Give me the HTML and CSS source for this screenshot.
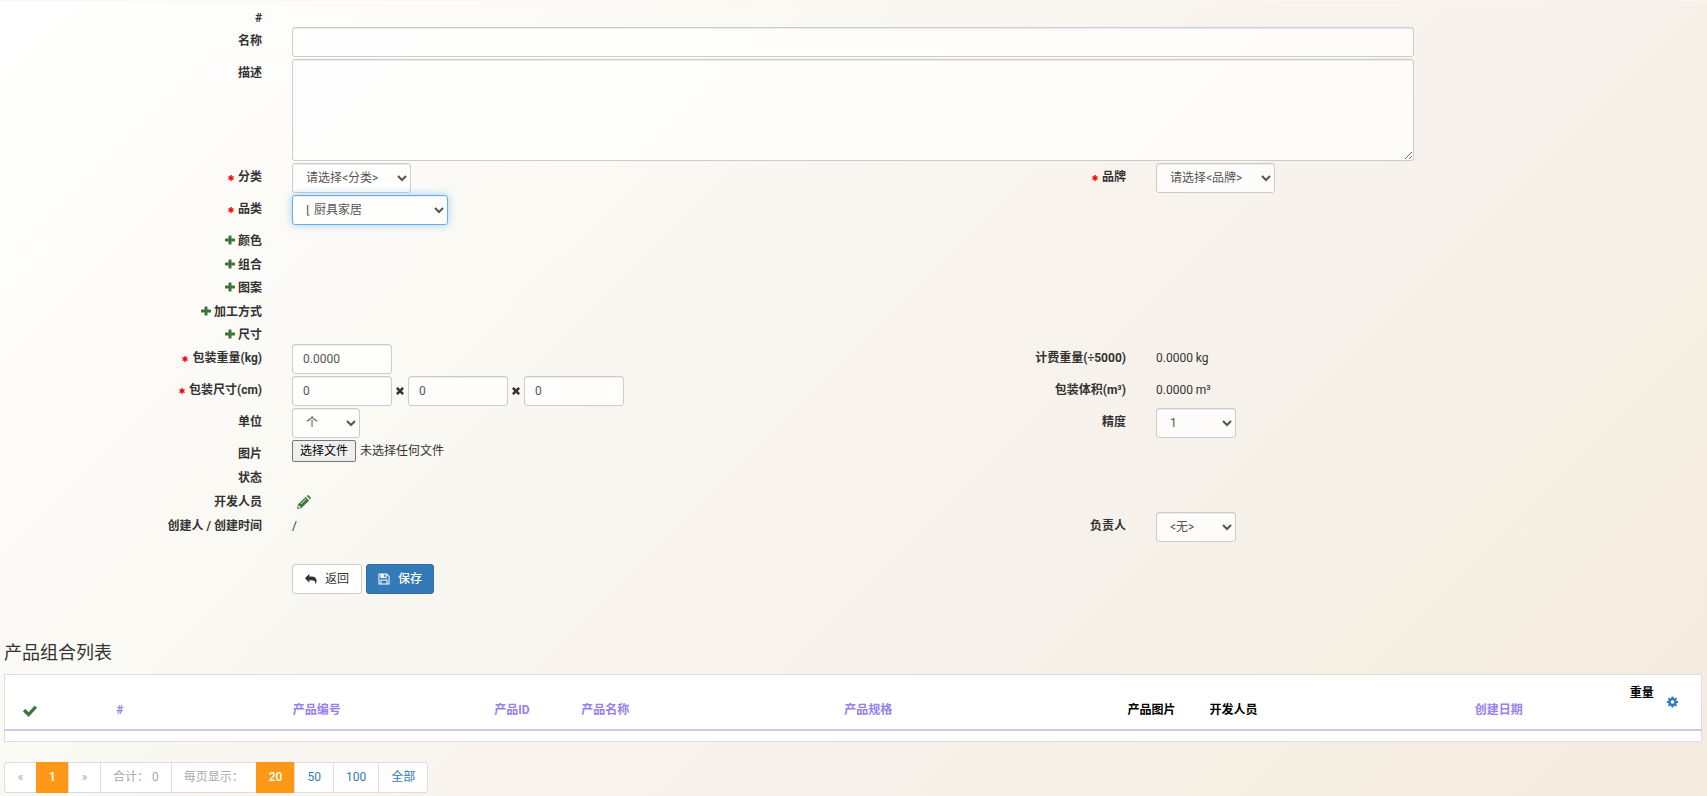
FILE: index.html
```html
<!DOCTYPE html>
<html lang="zh-CN">
<head>
    <meta charset="UTF-8">
    <meta name="viewport" content="width=device-width, initial-scale=1.0">
    <title>产品</title>
    <link rel="stylesheet" href="styles.css">
</head>
<body>

    <!-- icons used more than once -->
    <svg class="sprite" aria-hidden="true">
        <symbol id="star" viewBox="0 0 12 12">
            <path d="M4.6 0h2.8v3.6l3.1-1.8 1.4 2.4L8.8 6l3.1 1.8-1.4 2.4-3.1-1.8V12H4.6V8.4l-3.1 1.8L.1 7.8 3.2 6 .1 4.2l1.4-2.4 3.1 1.8z"/>
        </symbol>
        <symbol id="plus" viewBox="0 0 10 10">
            <path d="M4 .5h2q.5 0 .5.5v2.5H9.500q.5 0 .5.5v2q0 .5-.5.5H6.500V9q0 .5-.5.5H4q-.5 0-.5-.5V6.500H.5q-.5 0-.5-.5V4q0-.5.5-.5h3V1q0-.5.5-.5z"/>
        </symbol>
        <symbol id="times" viewBox="0 0 10 10">
            <path d="M2.600.3 5 2.700 7.400.3q.4-.3.800 0l1.500 1.500q.3.400 0 .8L7.300 5l2.400 2.400q.3.400 0 .8L8.200 9.700q-.4.300-.8 0L5 7.300 2.600 9.700q-.4.300-.8 0L.3 8.200q-.3-.4 0-.8L2.700 5 .3 2.600q-.3-.4 0-.8L1.800.3q.4-.3.800 0z"/>
        </symbol>
    </svg>

    <div class="container">
        <form class="product-form">
            <div class="row">
                <span class="label">#</span>
            </div>
            <div class="row">
                <label class="label" for="name">名称</label>
                <div class="field wide"><input type="text" id="name" class="control"></div>
            </div>
            <div class="row">
                <label class="label" for="desc">描述</label>
                <div class="field wide"><textarea id="desc" class="control"></textarea></div>
            </div>
            <div class="row">
                <label class="label" for="category"><svg class="star"><use href="#star"/></svg>分类</label>
                <div class="field">
                    <select id="category" class="control select-md"><option>请选择&lt;分类&gt;</option></select>
                </div>
                <label class="label" for="brand"><svg class="star"><use href="#star"/></svg>品牌</label>
                <div class="field">
                    <select id="brand" class="control select-md"><option>请选择&lt;品牌&gt;</option></select>
                </div>
            </div>
            <div class="row">
                <label class="label" for="kind"><svg class="star"><use href="#star"/></svg>品类</label>
                <div class="field">
                    <select id="kind" class="control select-lg active"><option>⌊ 厨具家居</option></select>
                </div>
            </div>

            <div class="attributes">
                <div class="row"><span class="label"><svg class="plus"><use href="#plus"/></svg>颜色</span></div>
                <div class="row"><span class="label"><svg class="plus"><use href="#plus"/></svg>组合</span></div>
                <div class="row"><span class="label"><svg class="plus"><use href="#plus"/></svg>图案</span></div>
                <div class="row"><span class="label"><svg class="plus"><use href="#plus"/></svg>加工方式</span></div>
                <div class="row"><span class="label"><svg class="plus"><use href="#plus"/></svg>尺寸</span></div>
            </div>

            <div class="row">
                <label class="label" for="weight"><svg class="star"><use href="#star"/></svg>包装重量(kg)</label>
                <div class="field"><input type="text" id="weight" class="control number" value="0.0000"></div>
                <span class="label">计费重量(÷5000)</span>
                <div class="field text">0.0000 kg</div>
            </div>
            <div class="row">
                <label class="label" for="length"><svg class="star"><use href="#star"/></svg>包装尺寸(cm)</label>
                <div class="field size">
                    <input type="text" id="length" class="control number" value="0">
                    <svg class="times"><use href="#times"/></svg>
                    <input type="text" aria-label="宽" class="control number" value="0">
                    <svg class="times"><use href="#times"/></svg>
                    <input type="text" aria-label="高" class="control number" value="0">
                </div>
                <span class="label">包装体积(m³)</span>
                <div class="field text">0.0000 m³</div>
            </div>
            <div class="row">
                <label class="label" for="unit">单位</label>
                <div class="field">
                    <select id="unit" class="control select-xs"><option>个</option></select>
                </div>
                <label class="label" for="precision">精度</label>
                <div class="field">
                    <select id="precision" class="control select-sm"><option>1</option></select>
                </div>
            </div>
            <div class="row">
                <label class="label" for="picture">图片</label>
                <div class="field file">
                    <input type="file" id="picture">
                    <label class="file-btn" for="picture">选择文件</label>
                    <span>未选择任何文件</span>
                </div>
            </div>
            <div class="row">
                <span class="label">状态</span>
            </div>
            <div class="row developer">
                <span class="label">开发人员</span>
                <div class="field text">
                    <a href="#" aria-label="编辑"><svg class="pencil" viewBox="0 0 14 14"><path fill-rule="evenodd" d="M8.600 1.900.9 9.600 0 14l4.400-.9 7.700-7.700zM1.900 10.400l1.700 1.700-.6.600-1.100.2-.8-.8.200-1.100zM8.600 3.800l.5.500-5 5-.5-.5zM9.600.9l.6-.5q.7-.6 1.400 0l2 2q.6.700 0 1.400l-.5.600z"/></svg></a>
                </div>
            </div>
            <div class="row">
                <span class="label">创建人 / 创建时间</span>
                <div class="field text">/</div>
                <label class="label" for="owner">负责人</label>
                <div class="field">
                    <select id="owner" class="control select-sm"><option>&lt;无&gt;</option></select>
                </div>
            </div>

            <div class="row actions">
                <div class="field buttons">
                    <button type="button" class="btn">
                        <svg viewBox="0 0 14 12"><path d="M5 0v3h2.500C11.500 3 13.500 5.200 13.500 8c0 1.500-.6 3-1.300 4 .2-3-1-4.500-4.700-4.500H5v3L0 5.200z"/></svg>
                        返回
                    </button>
                    <button type="submit" class="btn primary">
                        <svg viewBox="0 0 12 12"><path fill-rule="evenodd" d="M1 .5h8L11.500 3v8q0 .5-.5.5H1q-.5 0-.5-.5V1q0-.5.5-.5zm.5 1v9h1V7q0-.5.5-.5h6q.5 0 .5.500v3.500h1V3.400L8.600 1.500V4.500q0 .5-.5.500H3q-.5 0-.5-.5v-3zM5.800 1.500V4h1.500V1.500zM3.500 7.500v3h5v-3z"/></svg>
                        保存
                    </button>
                </div>
            </div>
        </form>

        <h4>产品组合列表</h4>

        <table>
            <colgroup>
                <col class="c-check">
                <col class="c-id">
                <col class="c-code">
                <col class="c-pid">
                <col class="c-name">
                <col class="c-spec">
                <col class="c-pic">
                <col class="c-dev">
                <col class="c-date">
                <col class="c-weight">
                <col class="c-gear">
            </colgroup>
            <thead>
                <tr>
                    <th><svg class="check" viewBox="0 0 14 12"><path d="M5.200 11.600.3 6.700q-.4-.4 0-.8L1.900 4.300q.4-.4.800 0l2.900 2.900L11.300.9q.4-.4.800 0l1.600 1.600q.4.400 0 .8L6 11.600q-.4.400-.8 0z"/></svg></th>
                    <th><a href="#">#</a></th>
                    <th><a href="#">产品编号</a></th>
                    <th><a href="#">产品ID</a></th>
                    <th><a href="#">产品名称</a></th>
                    <th><a href="#">产品规格</a></th>
                    <th>产品图片</th>
                    <th class="left">开发人员</th>
                    <th><a href="#">创建日期</a></th>
                    <th class="right">重量<br>&nbsp;</th>
                    <th class="middle"><svg class="gear" viewBox="0 0 12 12"><path fill-rule="evenodd" d="M5 0h2l.3 1.700.9.400L9.600 1.100 11 2.500 9.900 3.900l.4.900L12 5v2l-1.700.3-.4.900L11 9.600 9.600 11 8.200 9.900l-.9.400L7 12H5l-.3-1.700-.9-.4L2.400 11 1 9.600l1.100-1.400-.4-.9L0 7V5l1.700-.3.400-.9L1 2.400 2.400 1l1.400 1.100.9-.4zM6 4a2 2 0 1 0 0 4 2 2 0 0 0 0-4z"/></svg></th>
                </tr>
            </thead>
            <tbody>
                <tr><td colspan="11"></td></tr>
            </tbody>
        </table>

        <ul class="pagination">
            <li class="disabled"><span>«</span></li>
            <li class="current"><a href="#">1</a></li>
            <li class="disabled"><span>»</span></li>
            <li class="disabled"><span>合计： 0</span></li>
            <li class="disabled"><span>每页显示：</span></li>
            <li class="current"><a href="#">20</a></li>
            <li><a href="#">50</a></li>
            <li><a href="#">100</a></li>
            <li><a href="#">全部</a></li>
        </ul>
    </div>

</body>
</html>
```
FILE: styles.css
```css
* {
    box-sizing: border-box;
}

body {
    margin: 0;
    min-height: 100vh;
    font-family: Roboto, "Noto Sans CJK SC", sans-serif;
    font-size: 12px;
    line-height: 17px;
    color: #333;
    background: linear-gradient(135deg, #fff 0%, #fbfaf6 25%, #f8f4ed 52%, #f6f1ea 65%, #f4f0e4 80%, #f5ede2 86%, #f4ebdf 100%);
}

a {
    color: #337ab7;
    text-decoration: none;
}

svg {
    fill: currentColor;
}

.sprite {
    display: none;
}

.container {
    padding: 3px 5px 0 4px;
    border-top: 1px solid #f9f7f0;
    overflow: hidden;
}

/* form */

.row {
    display: flex;
    margin: 0 -15px;
}

.label {
    flex: none;
    width: 16.6667%;
    padding: 6px 15px 0;
    text-align: right;
    font-weight: bold;
}

.field {
    flex: none;
    width: 33.3333%;
    padding: 0 15px 2px;
}

.attributes {
    display: flex;
    flex-direction: column;
    justify-content: space-between;
    height: 117px;
}

.wide {
    width: 66.6667%;
}

.text {
    padding-top: 6px;
}

.control {
    display: block;
    width: 100%;
    height: 30px;
    padding: 5px 10px;
    font: inherit;
    line-height: 18px;
    color: #555;
    background-color: rgba(255, 255, 255, 0.75);
    border: 1px solid #ccc;
    border-radius: 3px;
    box-shadow: inset 0 1px 1px rgba(0, 0, 0, 0.075);
}

textarea.control {
    height: 102px;
}

.control.number {
    width: 100px;
}

.control.select-xs {
    width: 68px;
}

.control.select-sm {
    width: 80px;
}

.control.select-md {
    width: 119px;
}

.control.select-lg {
    width: 156px;
}

select.control {
    padding: 5px 9px;
}

.control.active {
    border-color: #66afe9;
    box-shadow: inset 0 1px 1px rgba(0, 0, 0, 0.075), 0 0 8px rgba(102, 175, 233, 0.6);
}

.star {
    width: 6px;
    height: 6px;
    margin-right: 4px;
    color: #f00;
}

.plus {
    width: 10px;
    height: 10px;
    margin-right: 3px;
    color: #3c763d;
}

.times {
    width: 8px;
    height: 8px;
}

.pencil {
    width: 14px;
    height: 14px;
    margin-left: 5px;
    color: #3c763d;
    vertical-align: top;
}

.size {
    display: flex;
    align-items: center;
    gap: 4px;
}

.file {
    display: flex;
    align-items: center;
    gap: 4px;
    position: relative;
}

.file input {
    position: absolute;
    width: 1px;
    height: 1px;
    opacity: 0;
}

.file-btn {
    height: 22px;
    padding: 1px 7px;
    line-height: 18px;
    color: #000;
    background: #efefef;
    border: 1px solid #767676;
    border-radius: 2px;
}

.developer {
    padding-top: 1px;
}

.developer .text {
    padding: 7px 15px 0;
}

.actions {
    margin-top: 20px;
}

.buttons {
    display: flex;
    gap: 4px;
    margin-left: 16.6667%;
}

.btn {
    display: flex;
    align-items: center;
    gap: 8px;
    height: 30px;
    padding: 0 12px;
    font: inherit;
    color: #333;
    background: #fff;
    border: 1px solid #ccc;
    border-radius: 3px;
    cursor: pointer;
}

.btn svg {
    width: 12px;
    height: 12px;
}

.btn.primary {
    padding: 0 11px;
    color: #fff;
    font-weight: 500;
    background: #337ab7;
    border-color: #2e6da4;
}

/* list */

h4 {
    margin: 47px 0 11px;
    font-size: 18px;
    font-weight: normal;
    line-height: 20px;
}

table {
    width: 100%;
    table-layout: fixed;
    border-collapse: collapse;
    background: #fff;
    border: 1px solid #ddd;
}

.c-check { width: 3%; }
.c-id { width: 7.6%; }
.c-code { width: 15.6%; }
.c-pid { width: 7.4%; }
.c-name { width: 3.6%; }
.c-spec { width: 27.4%; }
.c-pic { width: 6%; }
.c-dev { width: 11.2%; }
.c-date { width: 12.5%; }
.c-weight { width: 3.3%; }
.c-gear { width: 2.4%; }

th {
    padding: 10px 0;
    vertical-align: bottom;
    white-space: nowrap;
    color: #000;
    border-bottom: 2px solid #d0c8ec;
}

th a {
    color: #9680ee;
}

td {
    height: 11px;
    padding: 0;
}

.left {
    padding-left: 7px;
    text-align: left;
}

.right {
    padding-right: 7px;
    text-align: right;
}

.middle {
    padding-right: 16px;
    vertical-align: middle;
}

.check {
    width: 14px;
    height: 12px;
    color: #3c763d;
    vertical-align: middle;
}

.gear {
    width: 11px;
    height: 12px;
    color: #337ab7;
    vertical-align: middle;
}

.pagination {
    display: flex;
    margin: 20px 0 0;
    padding: 0;
    list-style: none;
}

.pagination li > * {
    display: block;
    min-width: 32px;
    height: 31px;
    padding: 6px 12px;
    text-align: center;
    background: #fff;
    border: 1px solid #ddd;
    border-right-width: 0;
}

.pagination .disabled span {
    color: #aaa;
}

.pagination .current a {
    color: #fff;
    font-weight: 500;
    background: #ff9717;
    border-color: #ff9717;
}

.pagination li:first-child span {
    border-radius: 3px 0 0 3px;
}

.pagination li:last-child a {
    border-right-width: 1px;
    border-radius: 0 3px 3px 0;
}
```
